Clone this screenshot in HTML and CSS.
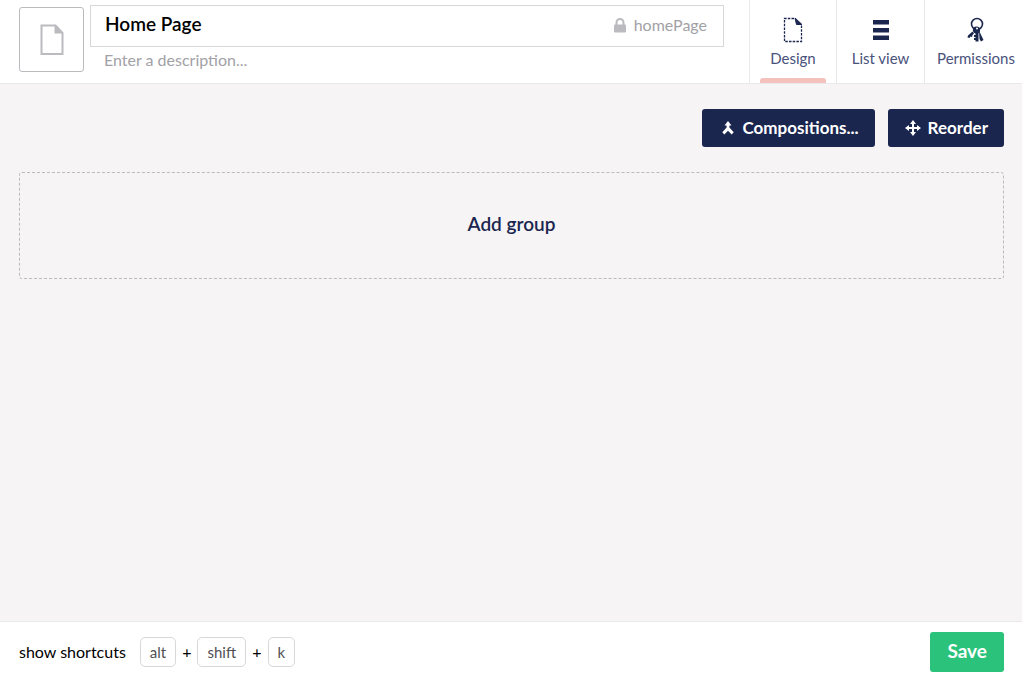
FILE: index.html
```html
<!DOCTYPE html>
<html lang="en">
<head>
<meta charset="utf-8">
<meta name="viewport" content="width=device-width, initial-scale=1">
<title>Home Page</title>
<link rel="stylesheet" href="styles.css">
</head>
<body>
<header class="header">
  <button class="doc-icon" type="button" aria-label="Choose icon">
    <svg width="24" height="32" viewBox="0 0 24 32"><path d="M1.500 1.500H15.500L22.500 9V30H1.500Z" fill="none" stroke="#bbbabf" stroke-width="2"/><path d="M14.500 .5L23.500 9.500H14.500Z" fill="#bbbabf"/></svg>
  </button>
  <div class="titles">
    <div class="name-box">
      <input class="name" type="text" value="Home Page" aria-label="Name">
      <button class="alias" type="button">
        <svg width="12" height="15" viewBox="0 0 12 15"><path d="M2.500 7V4.500a3.500 3.500 0 0 1 7 0V7" fill="none" stroke="#bbbabf" stroke-width="2"/><rect y="6.500" width="12" height="8" rx="1" fill="#bbbabf"/></svg>
        <span>homePage</span>
      </button>
    </div>
    <input class="description" type="text" placeholder="Enter a description..." aria-label="Description">
  </div>
  <nav class="tabs">
    <button class="tab tab-active" type="button">
      <svg width="24" height="26" viewBox="0 0 24 26"><path d="M13 1.500H3.500V24.500H20.500V8" fill="none" stroke="#1b264f" stroke-width="1.300" stroke-dasharray="2.500 1.200"/><path d="M14 1L21 7.500H15.500Z" fill="#1b264f" stroke="#1b264f"/></svg>
      <span>Design</span>
    </button>
    <button class="tab" type="button">
      <svg width="24" height="26" viewBox="0 0 24 26" fill="#1b264f"><path d="M4 3h16v4.500H4zM4 11h16v4.500H4zM4 18.500h16v4.500H4z"/></svg>
      <span>List view</span>
    </button>
    <button class="tab tab-last" type="button">
      <svg width="24" height="26" viewBox="0 0 24 26"><circle cx="13" cy="7" r="5.500" fill="none" stroke="#1b264f" stroke-width="1.600"/><circle cx="12.500" cy="13" r="3.600" fill="#1b264f"/><circle cx="13" cy="11.500" r="1" fill="#fff"/><path d="M11.500 14h3v10.500h-3v-1.500h-1.500v-2h1.500v-1h-1.500v-2h1.500zM8.500 14.500L4 18.500 3.500 20.500 5.500 21 6.500 19.500 8 20 8.500 18 10 16.500zM15 13.500L19.500 23 17 24.500 15.500 22z" fill="#1b264f"/></svg>
      <span>Permissions</span>
    </button>
  </nav>
</header>
<main class="main">
  <div class="toolbar">
    <button class="action action-compose" type="button">
      <svg width="12" height="14" viewBox="0 0 12 14"><path d="M6 0L9.500 4.500H7.400V6.500L11.700 11.200 9.700 13.500 6 9.800 2.300 13.500 .3 11.200 4.600 6.500V4.500H2.500Z" fill="#fff"/></svg>
      <span>Compositions...</span>
    </button>
    <button class="action" type="button">
      <svg width="16" height="16" viewBox="0 0 16 16"><path d="M8 0L11 4H9V7H12V5L16 8 12 11V9H9V12H11L8 16 5 12H7V9H4V11L0 8 4 5V7H7V4H5Z" fill="#fff"/></svg>
      <span>Reorder</span>
    </button>
  </div>
  <button class="add-group" type="button">Add group</button>
</main>
<footer class="footer">
  <button class="shortcuts" type="button">
    <span class="shortcuts-label">show shortcuts</span>
    <kbd>alt</kbd><span>+</span><kbd>shift</kbd><span>+</span><kbd>k</kbd>
  </button>
  <button class="save" type="button">Save</button>
</footer>
</body>
</html>
```
FILE: styles.css
```css
* { box-sizing: border-box; }

body {
  margin: 0;
  min-height: 100vh;
  display: flex;
  flex-direction: column;
  background: #f6f4f5;
  color: #000;
  font: 16px/20px Lato, "Open Sans", sans-serif;
}

button, input {
  font: inherit;
  margin: 0;
  padding: 0;
  border: 0;
  background: none;
  color: inherit;
}

button { cursor: pointer; }
svg { display: block; flex: none; }

.header {
  display: flex;
  min-height: 84px;
  padding-left: 19px;
  background: #fff;
  border-bottom: 1px solid #e9e9eb;
}

.doc-icon {
  flex: none;
  display: flex;
  align-items: center;
  justify-content: center;
  width: 65px;
  height: 65px;
  margin-top: 7px;
  border: 1px solid #bbbabf;
  border-radius: 3px;
}

.titles {
  flex: 1;
  min-width: 0;
  display: flex;
  flex-direction: column;
  padding: 5px 25px 0 6px;
}

.name-box {
  display: flex;
  align-items: center;
  height: 42px;
  padding: 0 16px 2px 14px;
  border: 1px solid #d8d7d9;
}

.name {
  flex: 1;
  min-width: 0;
  height: 24px;
  margin-bottom: 4px;
  font-size: 19px;
  font-weight: 600;
}

.alias {
  display: flex;
  align-items: center;
  gap: 8px;
  color: #a2a1a6;
}

.description {
  height: 24px;
  padding-left: 14px;
  color: #515054;
}

.description::placeholder { color: #a2a1a6; opacity: 1; }

.tabs { display: flex; flex: none; }

.tab {
  position: relative;
  width: 88px;
  display: flex;
  flex-direction: column;
  align-items: center;
  gap: 5px;
  padding-top: 17px;
  border-left: 1px solid #e9e9eb;
  color: #49527a;
  font-size: 15px;
}

.tab-active { width: 87px; }
.tab-last { width: 98px; padding-left: 5px; }

.tab-active::after {
  content: "";
  position: absolute;
  left: 10px;
  right: 10px;
  bottom: 0;
  height: 5px;
  border-radius: 3px 3px 0 0;
  background: #f5c1bc;
}

.main {
  flex: 1;
  display: flex;
  flex-direction: column;
  gap: 25px;
  padding: 25px 18px 25px 19px;
}

.toolbar {
  display: flex;
  justify-content: flex-end;
  gap: 13px;
}

.action {
  display: flex;
  align-items: center;
  gap: 7px;
  height: 38px;
  padding: 0 16px 0 17px;
  border-radius: 3px;
  background: #1b264f;
  color: #fff;
  font-size: 17px;
  font-weight: 700;
}

.action-compose { padding-left: 20px; gap: 8px; }

.add-group {
  height: 107px;
  padding-bottom: 4px;
  border: 1px dashed #bbbabf;
  border-radius: 3px;
  color: #1b264f;
  font-size: 19px;
  font-weight: 600;
}

.footer {
  display: flex;
  align-items: center;
  justify-content: space-between;
  height: 59px;
  padding: 1px 18px 0 19px;
  border-top: 1px solid #e9e9eb;
  background: #fff;
}

.shortcuts {
  display: flex;
  align-items: center;
  gap: 6px;
}

.shortcuts-label { margin-right: 8px; }

kbd {
  height: 30px;
  padding: 0 9px;
  border: 1px solid #d8d7d9;
  border-radius: 5px;
  color: #515054;
  font: 15px/28px Lato, "Open Sans", sans-serif;
}

.save {
  height: 40px;
  padding: 0 17px 2px;
  border-radius: 3px;
  background: #2bc37c;
  color: #fff;
  font-size: 19px;
  font-weight: 700;
}
```
